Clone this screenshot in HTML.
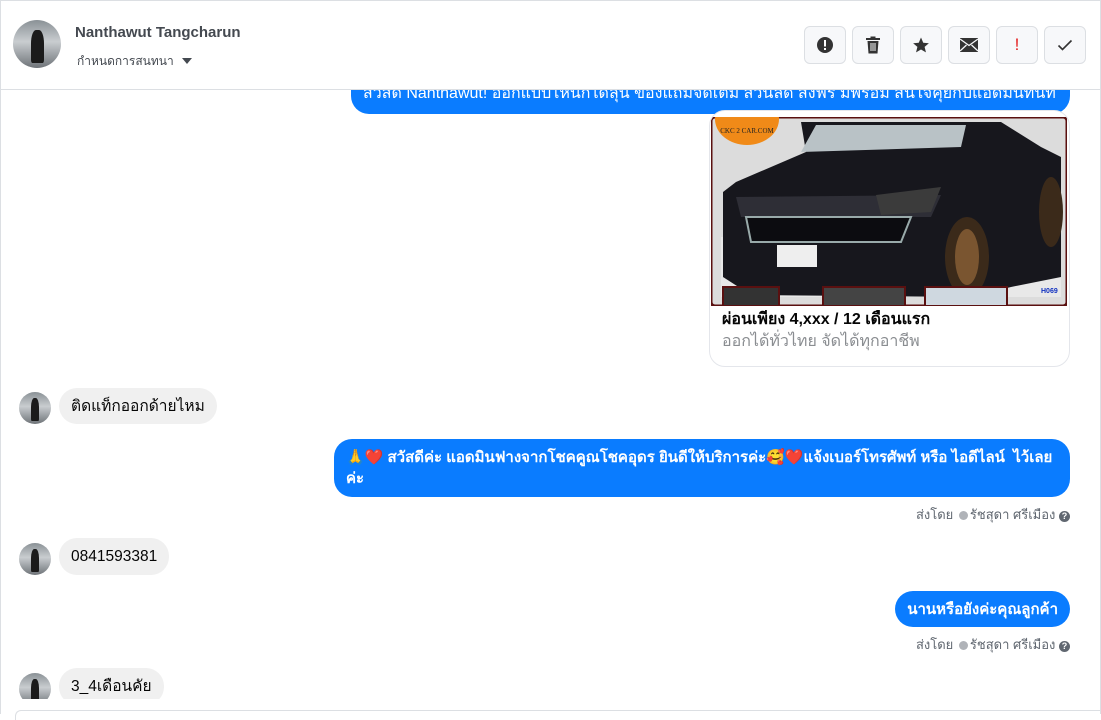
<!DOCTYPE html>
<html><head><meta charset="utf-8">
<style>
*{box-sizing:border-box;margin:0;padding:0}
body{width:1101px;height:714px;overflow:hidden;background:#fff;font-family:"Liberation Sans",sans-serif;position:relative;color:#050505}
.frame{position:absolute;left:0;top:0;width:1101px;height:714px;border-left:1px solid #dcdfe3;border-top:1px solid #dcdfe3;border-right:1px solid #dcdfe3}
.header{position:absolute;left:1px;top:1px;width:1099px;height:89px;background:#fff;border-bottom:1px solid #dcdfe3;z-index:5}
.av{position:absolute;border-radius:50%;background:linear-gradient(180deg,#8a9196 0%,#c9cdd0 45%,#6f7479 100%);overflow:hidden}
.av::after{content:"";position:absolute;left:38%;top:20%;width:26%;height:70%;background:#1b1b1b;border-radius:40% 40% 10% 10%}
.name{position:absolute;left:74px;top:23px;font-size:15px;font-weight:bold;color:#444950}
.sub{position:absolute;left:76px;top:51px;font-size:12px;color:#444950}
.sub b{display:inline-block;width:0;height:0;border-left:5px solid transparent;border-right:5px solid transparent;border-top:6px solid #444950;margin-left:8px;vertical-align:1px}
.btn{position:absolute;top:25px;width:42px;height:38px;border:1px solid #dcdfe3;border-radius:6px;background:#f7f8fa;display:flex;align-items:center;justify-content:center}
.bub{position:absolute;border-radius:18px;font-size:16px;line-height:21px;padding:8px 12px;white-space:nowrap}
.in{background:#f0f0f0;color:#050505;font-size:15.5px}
.out{background:#0a7cff;color:#fff}
.sent{position:absolute;right:31px;font-size:13px;color:#606770}
.dot{display:inline-block;width:9px;height:9px;border-radius:50%;background:#b0b3b8;vertical-align:-1px;margin:0 2px}
.q{display:inline-block;width:11px;height:11px;border-radius:50%;background:#606770;color:#fff;font-size:9px;line-height:11px;text-align:center;font-weight:bold;vertical-align:0}
</style></head><body>
<div class="frame"></div>

<div class="bub out" style="left:351px;top:70px;width:719px;height:44px;padding-top:13px;overflow:hidden">สวัสดี Nanthawut! ออกแบบไหนก็ได้ลุ้น ของแถมจัดเต็ม ส่วนลด ส่งฟรี มีพร้อม สนใจคุยกับแอดมินทันที</div>

<div style="position:absolute;left:709px;top:110px;width:361px;height:257px;border:1px solid #e4e6eb;border-radius:16px;overflow:hidden;background:#fff">
  <svg style="position:absolute;left:1px;top:6px" width="356" height="189" viewBox="0 0 356 189">
    <rect x="0" y="0" width="356" height="189" fill="#dcdcdc" stroke="#5a1010" stroke-width="3" rx="4"/>
    <rect x="10" y="120" width="340" height="60" fill="#e8e8e8"/>
    <path d="M90 5 L290 5 L330 30 L350 40 L350 160 L300 170 L260 180 L40 178 L12 160 L12 75 L25 65 L95 35 Z" fill="#17171d"/>
    <path d="M105 8 L255 8 L250 30 L90 35 Z" fill="#b9c2c6"/>
    <path d="M25 80 L230 78 L220 100 L30 100 Z" fill="#2e2e36"/>
    <path d="M35 100 L200 100 L190 125 L40 125 Z" fill="#0c0c10" stroke="#9aa" stroke-width="2"/>
    <path d="M165 78 L230 70 L220 95 L170 98 Z" fill="#3b3b3b"/>
    <rect x="66" y="128" width="40" height="22" fill="#eee"/>
    <ellipse cx="256" cy="140" rx="22" ry="40" fill="#3b2a1a"/>
    <ellipse cx="256" cy="140" rx="12" ry="28" fill="#7a5530"/>
    <ellipse cx="340" cy="95" rx="12" ry="35" fill="#3b2a1a"/>
    <ellipse cx="36" cy="2" rx="32" ry="26" fill="#f08a18"/>
    <text x="36" y="16" font-size="7" text-anchor="middle" font-family="Liberation Serif" fill="#222">CKC 2 CAR.COM</text>
    <rect x="12" y="170" width="56" height="19" fill="#333" stroke="#5a1010" stroke-width="2"/>
    <rect x="112" y="170" width="82" height="19" fill="#444" stroke="#5a1010" stroke-width="2"/>
    <rect x="214" y="170" width="82" height="19" fill="#cfd8e0" stroke="#5a1010" stroke-width="2"/>
    <text x="330" y="176" font-size="7" font-weight="bold" fill="#1030c0">H069</text>
  </svg>
  <div style="position:absolute;left:12px;top:196px;font-size:16px;font-weight:bold;color:#050505">ผ่อนเพียง 4,xxx / 12 เดือนแรก</div>
  <div style="position:absolute;left:12px;top:218px;font-size:16px;color:#8a8d91">ออกได้ทั่วไทย จัดได้ทุกอาชีพ</div>
</div>

<div class="av" style="left:19px;top:392px;width:32px;height:32px"></div>
<div class="bub in" style="left:59px;top:388px;height:36px">ติดแท็กออกด้ายไหม</div>

<div class="bub out" style="left:334px;top:439px;width:736px;height:58px;font-weight:bold;font-size:15px">🙏❤️ สวัสดีค่ะ แอดมินฟางจากโชคคูณโชคอุดร ยินดีให้บริการค่ะ🥰❤️แจ้งเบอร์โทรศัพท์ หรือ ไอดีไลน์ &nbsp;ไว้เลย<br>ค่ะ</div>
<div class="sent" style="top:504px">ส่งโดย <span class="dot"></span>รัชสุดา ศรีเมือง <span class="q">?</span></div>

<div class="av" style="left:19px;top:543px;width:32px;height:32px"></div>
<div class="bub in" style="left:59px;top:538px;height:37px">0841593381</div>

<div class="bub out" style="right:31px;top:591px;height:36px;font-weight:bold;font-size:15px">นานหรือยังค่ะคุณลูกค้า</div>
<div class="sent" style="top:634px">ส่งโดย <span class="dot"></span>รัชสุดา ศรีเมือง <span class="q">?</span></div>

<div style="position:absolute;left:0;top:668px;width:1101px;height:31px;overflow:hidden">
<div class="av" style="left:19px;top:5px;width:32px;height:32px"></div>
<div class="bub in" style="left:59px;top:0;height:37px">3_4เดือนคัย</div>
</div>
<div style="position:absolute;left:15px;top:710px;width:1086px;height:10px;border-top:1px solid #dcdfe3;border-left:1px solid #dcdfe3;border-radius:6px 0 0 0"></div>

<div class="header">
  <div class="av" style="left:12px;top:19px;width:48px;height:48px"></div>
  <div class="name">Nanthawut Tangcharun</div>
  <div class="sub">กำหนดการสนทนา<b></b></div>
  <div class="btn" style="left:803px"><svg width="18" height="18" viewBox="0 0 18 18"><circle cx="9" cy="9" r="8" fill="#333"/><rect x="8" y="4" width="2" height="6.5" fill="#fff"/><rect x="8" y="12" width="2" height="2" fill="#fff"/></svg></div>
  <div class="btn" style="left:851px"><svg width="16" height="18" viewBox="0 0 16 18"><rect x="1" y="2" width="14" height="2" fill="#333"/><rect x="5.5" y="0.5" width="5" height="2" fill="#333"/><path d="M2.5 5h11l-1 12.5h-9z" fill="#333"/><path d="M6 7v8M8 7v8M10 7v8" stroke="#f7f8fa" stroke-width="1"/></svg></div>
  <div class="btn" style="left:899px"><svg width="18" height="18" viewBox="0 0 24 24"><path d="M12 2l3 7 7.5.6-5.7 4.9 1.8 7.4L12 18l-6.6 3.9 1.8-7.4L1.5 9.6 9 9z" fill="#333"/></svg></div>
  <div class="btn" style="left:947px"><svg width="18" height="14" viewBox="0 0 18 14"><rect x="0" y="0" width="18" height="14" fill="#333"/><path d="M0 1l9 6.5L18 1M0 13l6.5-6M18 13l-6.5-6" stroke="#f7f8fa" stroke-width="1.3" fill="none"/></svg></div>
  <div class="btn" style="left:995px;color:#e41e1e;font-size:17px">!</div>
  <div class="btn" style="left:1043px"><svg width="16" height="12" viewBox="0 0 16 12"><path d="M1.5 6.5l4 4L14.5 1.5" stroke="#333" stroke-width="1.6" fill="none"/></svg></div>
</div>
</body></html>
